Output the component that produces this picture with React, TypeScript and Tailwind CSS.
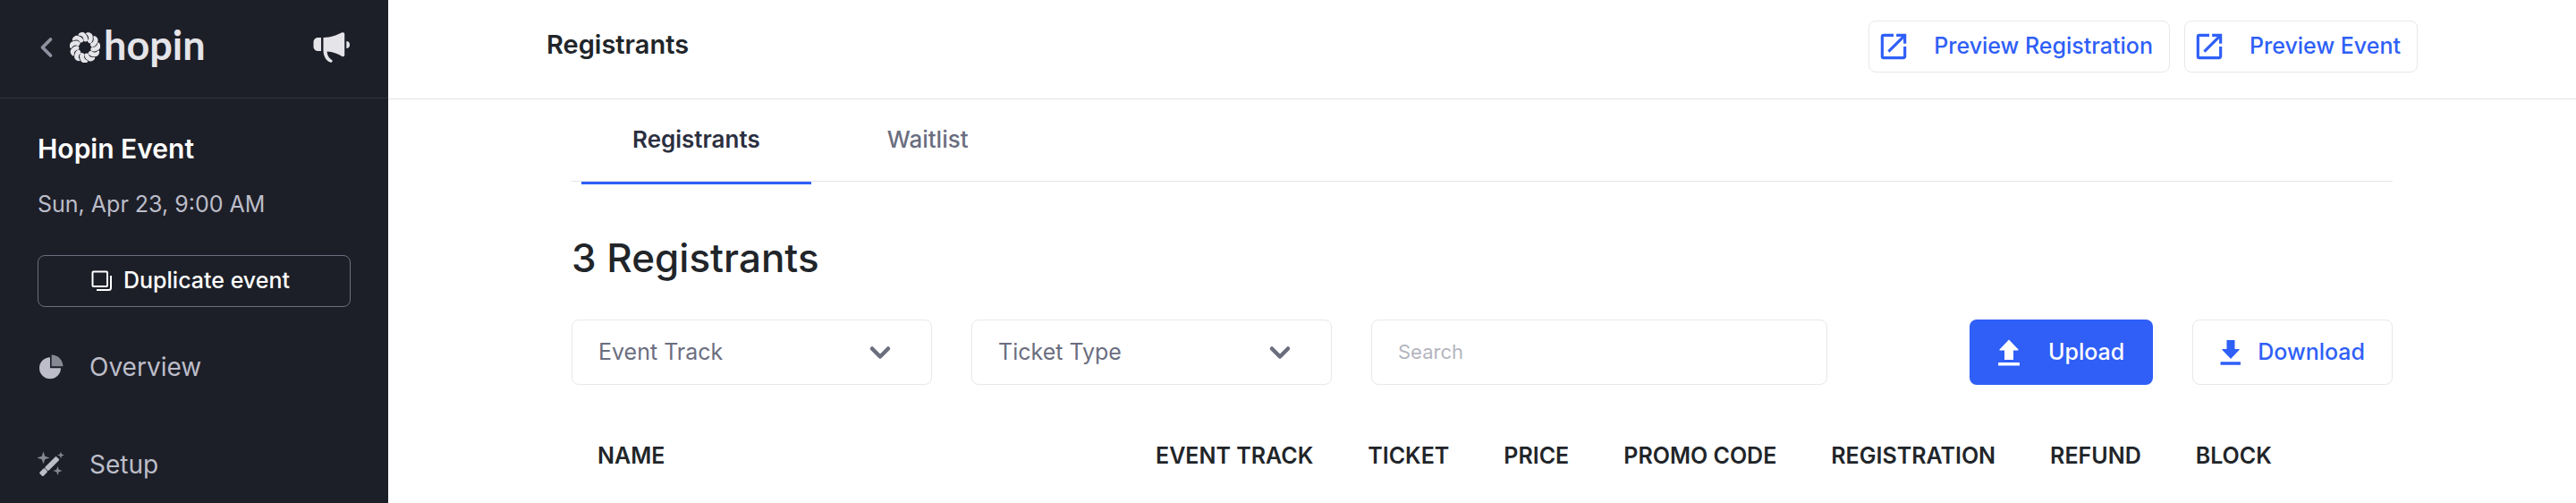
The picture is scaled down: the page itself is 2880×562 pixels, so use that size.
import { ChevronDown, ChevronLeft } from 'lucide-react';
import { MdOutlineOpenInNew } from 'react-icons/md';

const PETALS = Array.from({ length: 11 }, (_, i) => (i * 360) / 11);

const FILTERS = [
  { id: 'event-track', label: 'Event Track' },
  { id: 'ticket-type', label: 'Ticket Type' }
];

const COLUMNS = ['Event track', 'Ticket', 'Price', 'Promo code', 'Registration', 'Refund', 'Block'];

function LogoMark() {
  return (
    <svg viewBox="-17 -17 34 34" className="w-[34px] h-[34px]" fill="currentColor" aria-hidden="true">
      {PETALS.map((a) => (
        <path
          key={a}
          transform={`rotate(${a})`}
          d="M-7.4 -14.8C-5.5 -17.2 -1.3 -17.8 0.5 -15.2C2.6 -12.8 4 -10.2 2.6 -7C1.2 -6.200 -0.8 -6.500 -1.700 -7.800C-1.2 -11 -3.4 -13.2 -7.4 -13.4Z"
        />
      ))}
    </svg>
  );
}

function MegaphoneIcon() {
  return (
    <svg viewBox="0 0 42 34" className="w-[42px] h-[34px]" fill="currentColor" aria-hidden="true">
      <path d="M9 6H5.500C2.500 6 0.500 8.500 0.500 11V16C0.500 18.700 2.500 21 5.500 21H9Z" />
      <path d="M11.500 6C20 6 26 3.500 32 0.600C34 -0.200 35.200 0.600 35.200 2V25.500C35.200 27 34 27.600 32.500 27C27 24 22 22 15.600 21.600C15.800 26 17.600 29 21 31C22.200 31.800 21.600 33.800 19.800 33.800C14 32 11.500 26 11.500 20Z" />
      <path d="M37.300 10C39.500 10 41 11.600 41 14C41 16.400 39.500 18 37.300 18Z" />
    </svg>
  );
}

function DuplicateIcon() {
  return (
    <svg viewBox="0 0 24 24" className="w-6 h-6" fill="none" stroke="currentColor" strokeWidth="2" aria-hidden="true">
      <rect x="1.500" y="1.500" width="16.500" height="16.500" rx="1" />
      <path d="M22 6V19.500A2.500 2.500 0 0 1 19.500 22H6" />
    </svg>
  );
}

function PieIcon() {
  return (
    <svg viewBox="0 0 28 28" className="w-7 h-7" aria-hidden="true">
      <path d="M13 3.300A12 12 0 1 0 25 15.300H13Z" fill="#bcbdc9" />
      <path d="M14.600 0.500A12.800 12.800 0 0 1 27.400 13.300H14.600Z" fill="#868994" />
    </svg>
  );
}

function WandIcon() {
  return (
    <svg viewBox="0 0 30 30" className="w-[30px] h-[30px]" aria-hidden="true">
      <g fill="#868994">
        <path d="M6.500 0.500L8.200 5.800L13.500 7.500L8.200 9.200L6.500 14.500L4.800 9.200L-0.500 7.500L4.800 5.800Z" />
        <path d="M26 0.500L27 3.500L30 4.500L27 5.500L26 8.500L25 5.500L22 4.500L25 3.500Z" />
        <path d="M22.500 17L23.800 20.700L27.700 22L23.800 23.300L22.500 27L21.200 23.300L17.300 22L21.200 20.700Z" />
      </g>
      <g fill="#bcbdc9">
        <rect x="-9" y="-2.900" width="18" height="5.800" rx="1.200" transform="translate(16.200 14) rotate(-45)" />
        <rect x="-4" y="-2.900" width="8" height="5.800" rx="1.200" transform="translate(6.600 23.600) rotate(-45)" />
      </g>
    </svg>
  );
}

function UploadIcon() {
  return (
    <svg viewBox="0 0 24 30" className="w-6 h-[30px]" fill="currentColor" aria-hidden="true">
      <path d="M12 0.500L22.500 11.500Q23 12.500 22 12.500H17V23H7V12.500H2Q1 12.500 1.500 11.500ZM1 26H23Q24 26 24 27V29.500H0V27Q0 26 1 26Z" />
    </svg>
  );
}

function DownloadIcon() {
  return (
    <svg viewBox="0 0 24 30" className="w-6 h-[30px]" fill="currentColor" aria-hidden="true">
      <path d="M7.500 1H16.500V11H21Q22.300 11 21.500 12L12 22L2.500 12Q1.700 11 3 11H7.500ZM1 25.300H22.500Q23 25.300 23 26V28Q23 28.700 22.500 28.700H1Q0.500 28.700 0.500 28V26Q0.500 25.300 1 25.300Z" />
    </svg>
  );
}

function Sidebar() {
  return (
    <aside className="w-[434px] shrink-0 bg-[#1d1f28] text-[#e4e4e9]">
      <div className="flex items-center h-[110px] pl-[34px] pr-[42px] pb-1 border-b border-[#2f313d]">
        <button type="button" aria-label="Back" className="text-[#8f91a0]">
          <ChevronLeft strokeWidth={2.5} className="w-9 h-9" />
        </button>
        <a href="#" className="flex items-center gap-1 ml-2">
          <LogoMark />
          <span className="pb-1 font-['Lato'] font-bold text-[45px] leading-[45px]">hopin</span>
        </a>
        <button type="button" aria-label="Announcements" className="ml-auto">
          <MegaphoneIcon />
        </button>
      </div>

      <div className="px-[42px] pt-9">
        <h2 className="text-[30px] leading-10 font-semibold text-white">Hopin Event</h2>
        <p className="mt-[22px] text-[25px] leading-10 text-[#bcbdc9]">Sun, Apr 23, 9:00 AM</p>
        <button
          type="button"
          className="mt-[37px] pr-2 w-full h-[58px] flex items-center justify-center gap-3 rounded-lg border border-[#6b6e7d] text-[25px] font-medium text-white"
        >
          <DuplicateIcon />
          Duplicate event
        </button>
      </div>

      <nav className="mt-3 px-[42px] text-[28px] text-[#bcbdc9]">
        <a href="#" className="flex items-center gap-7 h-[109px]">
          <span className="w-[30px] flex justify-center">
            <PieIcon />
          </span>
          Overview
        </a>
        <a href="#" className="flex items-center gap-7 h-[109px]">
          <span className="w-[30px] flex justify-center">
            <WandIcon />
          </span>
          Setup
        </a>
      </nav>
    </aside>
  );
}

function PreviewButton({ label }: { label: string }) {
  return (
    <button
      type="button"
      className="flex items-center gap-[26px] h-[58px] pl-2 pr-[18px] rounded-lg border border-[#e7e8ec] text-[25px] font-medium text-[#2f5ff7]"
    >
      <MdOutlineOpenInNew className="w-[38px] h-[38px]" />
      {label}
    </button>
  );
}

export default function App() {
  return (
    <div className="flex h-screen overflow-hidden bg-white font-['Inter',sans-serif] text-[#212529]">
      <Sidebar />

      <main className="flex-1 min-w-0">
        <header className="h-[111px] border-b border-[#e4e5e8]">
          <div className="flex items-start gap-4 max-w-[2092px] mx-auto pt-[23px]">
            <h1 className="mr-auto text-[29px] leading-[54px] font-semibold">Registrants</h1>
            <PreviewButton label="Preview Registration" />
            <PreviewButton label="Preview Event" />
          </div>
        </header>

        <div className="max-w-[2036px] mx-auto">
          <div role="tablist" className="flex gap-7 px-[11px] h-[92px] border-b border-[#e4e5e8] text-[26px]">
            <button
              type="button"
              role="tab"
              aria-selected="true"
              className="h-[95px] px-[57px] pb-1 border-b-3 border-[#2f5ff7] font-semibold text-[#2b2f40]"
            >
              Registrants
            </button>
            <button
              type="button"
              role="tab"
              aria-selected="false"
              className="h-[95px] px-[57px] pb-1 border-b-3 border-transparent font-medium text-[#6b6e7f]"
            >
              Waitlist
            </button>
          </div>

          <h2 className="mt-[55px] text-[44px] leading-[60px] font-medium">3 Registrants</h2>

          <div className="flex gap-11 mt-[39px] h-[73px] text-[25px]">
            {FILTERS.map((f) => (
              <div key={f.id} className="relative w-[403px]">
                <select
                  id={f.id}
                  aria-label={f.label}
                  className="appearance-none w-full h-full pl-[29px] pr-20 rounded-lg border border-[#e7e8ec] bg-white text-[#6b6e7f]"
                >
                  <option>{f.label}</option>
                </select>
                <ChevronDown
                  strokeWidth={3}
                  className="absolute right-10 top-[19px] w-9 h-9 text-[#6b6e7f] pointer-events-none"
                />
              </div>
            ))}
            <input
              type="search"
              aria-label="Search"
              placeholder="Search"
              className="w-[510px] px-[29px] rounded-lg border border-[#e7e8ec] text-[22px] placeholder:text-[#b4b5c0]"
            />
            <button
              type="button"
              className="ml-auto flex items-center gap-8 px-8 rounded-lg bg-[#2f5ff7] font-medium text-white"
            >
              <UploadIcon />
              Upload
            </button>
            <button
              type="button"
              className="flex items-center gap-[18px] px-[30px] rounded-lg border border-[#e7e8ec] font-medium text-[#2f5ff7]"
            >
              <DownloadIcon />
              Download
            </button>
          </div>

          <table className="w-full mt-[57px] text-left text-[25px] leading-[44px] whitespace-nowrap">
            <thead>
              <tr className="uppercase">
                <th scope="col" className="w-[624px] pl-[29px] pr-8 font-semibold">Name</th>
                {COLUMNS.map((c) => (
                  <th key={c} scope="col" className="w-px pl-[29px] pr-8 font-semibold">{c}</th>
                ))}
                <td />
              </tr>
            </thead>
          </table>
        </div>
      </main>
    </div>
  );
}
